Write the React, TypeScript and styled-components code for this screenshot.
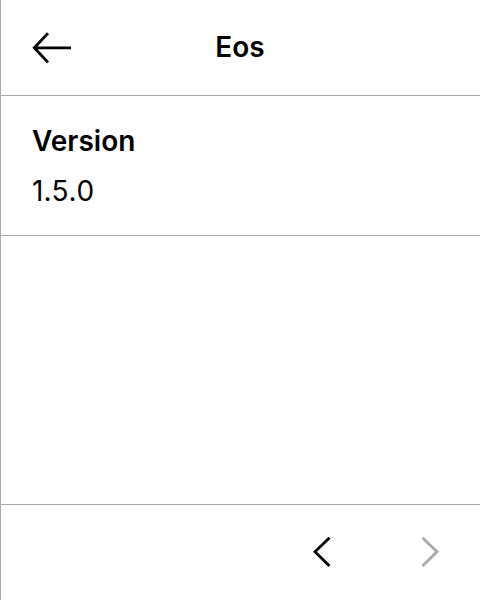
import React from "react";
import styled, { createGlobalStyle } from "styled-components";

const GlobalStyle = createGlobalStyle`
  *, *::before, *::after { box-sizing: border-box; }
  body {
    margin: 0;
    background: #fff;
    color: #000;
    font-family: Inter, "Liberation Sans", sans-serif;
  }
`;

const rule = "1px solid #a9a9a9";

const Screen = styled.div`
  display: flex;
  flex-direction: column;
  min-height: 100vh;
  border-left: ${rule};
`;

const Header = styled.header`
  display: grid;
  grid-template-columns: 1fr auto 1fr;
  align-items: center;
  height: 96px;
  padding: 0 32px 1px 31px;
  border-bottom: ${rule};
`;

const Title = styled.h1`
  margin: 0;
  font-size: 28px;
  line-height: 36px;
  font-weight: 600;
`;

const IconButton = styled.button`
  display: flex;
  align-items: center;
  justify-content: center;
  justify-self: start;
  padding: 0;
  border: 0;
  background: none;
  color: #000;
  cursor: pointer;

  &:disabled {
    color: #a9a9a9;
    cursor: default;
  }
`;

const Details = styled.dl`
  margin: 0;
  padding: 23px 31px;
  height: 140px;
  border-bottom: ${rule};
`;

const Term = styled.dt`
  font-size: 28px;
  line-height: 44px;
  font-weight: 600;
`;

const Value = styled.dd`
  margin: 0;
  font-size: 28px;
  line-height: 56px;
  font-kerning: none;
`;

const Main = styled.main`
  flex: 1;
`;

const Pager = styled.footer`
  display: flex;
  align-items: center;
  justify-content: flex-end;
  gap: 76px;
  height: 96px;
  padding: 0 34px 2px;
  border-top: ${rule};
`;

const BackIcon = () => (
  <svg width="40" height="32" viewBox="0 0 40 32" fill="none" stroke="currentColor" strokeWidth="2.8" aria-hidden="true">
    <path d="M16 2.2L2.3 16.8L16 31.4M2.3 16.8H39" />
  </svg>
);

const Chevron = ({ d }: { d: string }) => (
  <svg width="32" height="32" viewBox="0 0 32 32" fill="none" stroke="currentColor" strokeWidth="2.8" aria-hidden="true">
    <path d={d} />
  </svg>
);

export default function App() {
  return (
    <>
      <GlobalStyle />
      <Screen>
        <Header>
          <IconButton type="button" aria-label="Back">
            <BackIcon />
          </IconButton>
          <Title>Eos</Title>
        </Header>
        <Main>
          <Details>
            <Term>Version</Term>
            <Value>1.5.0</Value>
          </Details>
        </Main>
        <Pager>
          <IconButton type="button" aria-label="Previous">
            <Chevron d="M23.5 1.7L9 15.8L23.5 29.9" />
          </IconButton>
          <IconButton type="button" aria-label="Next" disabled>
            <Chevron d="M8.5 1.7L23 15.8L8.5 29.9" />
          </IconButton>
        </Pager>
      </Screen>
    </>
  );
}
